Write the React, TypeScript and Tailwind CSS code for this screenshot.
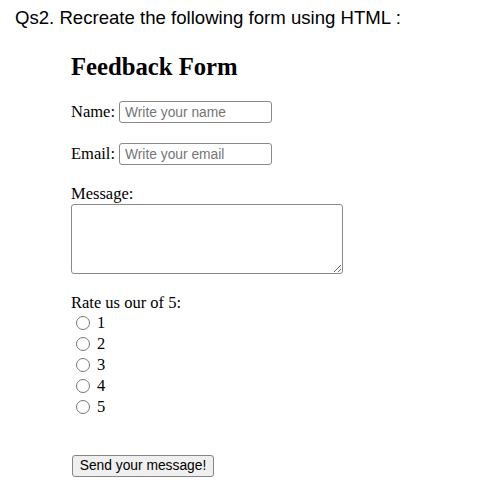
import React from "react";

const ratings = [1, 2, 3, 4, 5];

export default function App() {
  return (
    <div className="min-h-[489px] w-[487px] bg-white text-black pt-[7px]">
      <p className="pl-[15px] font-['Liberation_Sans',Arial,sans-serif] text-[18.6px] leading-[21px]">
        Qs2. Recreate the following form using HTML :
      </p>

      <form className="ml-[71px] font-['Liberation_Serif','Times_New_Roman',serif] text-[16.5px]">
        <h1 className="mt-[25px] text-[24.7px] leading-[28px] font-bold">Feedback Form</h1>

        <div className="mt-[20px] flex h-[22px] items-center gap-[4px] leading-[18px]">
          <label>Name:</label>
          <input
            type="text"
            placeholder="Write your name"
            className="h-[22px] w-[153px] rounded-[3px] border border-[#8a8a8a] px-[5px] font-['Liberation_Sans',Arial,sans-serif] text-[13.8px] placeholder:text-[#757575]"
          />
        </div>

        <div className="mt-[20px] flex h-[22px] items-center gap-[4px] leading-[18px]">
          <label>Email:</label>
          <input
            type="email"
            placeholder="Write your email"
            className="h-[22px] w-[153px] rounded-[3px] border border-[#8a8a8a] px-[5px] font-['Liberation_Sans',Arial,sans-serif] text-[13.8px] placeholder:text-[#757575]"
          />
        </div>

        <label className="mt-[20px] block leading-[18px]">Message:</label>
        <textarea className="mt-[1px] block h-[70px] w-[272px] rounded-[3px] border border-[#8a8a8a]" />

        <p className="mt-[20px] leading-[18px]">Rate us our of 5:</p>
        <div className="flex flex-col">
          {ratings.map((r) => (
            <label key={r} className="flex h-[21px] items-center leading-[18px]">
              <span className="ml-[5px] mr-[7px] h-[14px] w-[14px] rounded-full border border-[#767676] bg-white" />
              {r}
            </label>
          ))}
        </div>

        <button
          type="button"
          className="mt-[38px] ml-[1px] block h-[22px] w-[142px] rounded-[3px] border border-[#858585] bg-[#efefef] font-['Liberation_Sans',Arial,sans-serif] text-[13.8px] leading-[20px]"
        >
          Send your message!
        </button>
      </form>
    </div>
  );
}
